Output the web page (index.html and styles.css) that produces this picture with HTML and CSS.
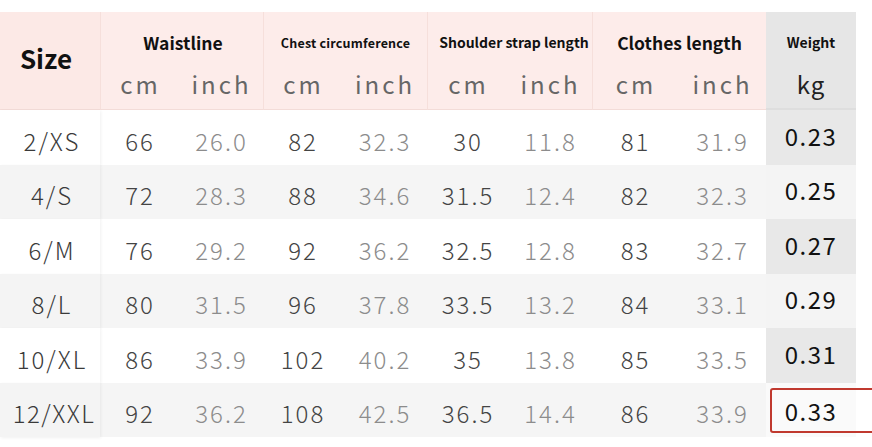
FILE: index.html
```html
<!DOCTYPE html>
<html>
<head>
<meta charset="utf-8">
<link rel="stylesheet" href="styles.css">
</head>
<body>
<div class="page">
  <div class="chart">
    <div class="h-size">Size</div>
    <div class="h-group g1">Waistline</div>
    <div class="h-group g2 small">Chest circumference</div>
    <div class="h-group g3 mid">Shoulder strap length</div>
    <div class="h-group g4">Clothes length</div>
    <div class="h-weight">Weight</div>

    <div class="h-unit">cm</div><div class="h-unit right-line">inch</div>
    <div class="h-unit">cm</div><div class="h-unit right-line">inch</div>
    <div class="h-unit">cm</div><div class="h-unit right-line">inch</div>
    <div class="h-unit">cm</div><div class="h-unit">inch</div>
    <div class="h-unit kg">kg</div>

    <div class="c size">2/XS</div><div class="c cm">66</div><div class="c in">26.0</div><div class="c cm">82</div><div class="c in">32.3</div><div class="c cm">30</div><div class="c in">11.8</div><div class="c cm">81</div><div class="c in">31.9</div><div class="c w dark">0.23</div>

    <div class="c size alt">4/S</div><div class="c cm alt">72</div><div class="c in alt">28.3</div><div class="c cm alt">88</div><div class="c in alt">34.6</div><div class="c cm alt">31.5</div><div class="c in alt">12.4</div><div class="c cm alt">82</div><div class="c in alt">32.3</div><div class="c w alt">0.25</div>

    <div class="c size">6/M</div><div class="c cm">76</div><div class="c in">29.2</div><div class="c cm">92</div><div class="c in">36.2</div><div class="c cm">32.5</div><div class="c in">12.8</div><div class="c cm">83</div><div class="c in">32.7</div><div class="c w dark">0.27</div>

    <div class="c size alt">8/L</div><div class="c cm alt">80</div><div class="c in alt">31.5</div><div class="c cm alt">96</div><div class="c in alt">37.8</div><div class="c cm alt">33.5</div><div class="c in alt">13.2</div><div class="c cm alt">84</div><div class="c in alt">33.1</div><div class="c w alt">0.29</div>

    <div class="c size">10/XL</div><div class="c cm">86</div><div class="c in">33.9</div><div class="c cm">102</div><div class="c in">40.2</div><div class="c cm">35</div><div class="c in">13.8</div><div class="c cm">85</div><div class="c in">33.5</div><div class="c w dark">0.31</div>

    <div class="c size alt last">12/XXL</div><div class="c cm alt">92</div><div class="c in alt">36.2</div><div class="c cm alt">108</div><div class="c in alt">42.5</div><div class="c cm alt">36.5</div><div class="c in alt">14.4</div><div class="c cm alt">86</div><div class="c in alt">33.9</div><div class="c w light">0.33</div>
  </div>
  <div class="highlight"></div>
</div>
</body>
</html>
```

FILE: styles.css
```css
html, body {
  margin: 0;
  padding: 0;
  background: #ffffff;
}

.page {
  position: relative;
  width: 872px;
  height: 447px;
  overflow: hidden;
  padding-top: 12px;
  box-sizing: border-box;
  font-family: "Noto Sans CJK SC", "Noto Sans", sans-serif;
}

.chart {
  display: grid;
  width: 856px;
  grid-template-columns: 100px 80px 83px 80px 84px 82px 83px 87px 87px 90px;
  grid-template-rows: 58px 40px repeat(6, 54.5px);
}

.h-size {
  grid-row: 1 / span 2;
  grid-column: 1;
  background: #fce9e6;
  display: flex;
  align-items: center;
  justify-content: center;
  font-weight: 700;
  font-size: 26px;
  color: #111;
  padding-bottom: 6px;
  padding-right: 8px;
  border-bottom: 1px solid #f3dcd8;
  box-sizing: border-box;
}

.h-group {
  background: #fdecea;
  display: flex;
  align-items: center;
  justify-content: center;
  font-weight: 700;
  font-size: 17.5px;
  color: #111;
  padding-top: 2px;
  white-space: nowrap;
  border-left: 1px solid #f6dfdb;
}
.h-group.small { font-size: 12.5px; letter-spacing: 0.2px; }
.h-group.mid { font-size: 14px; padding-left: 8px; }

.g1 { grid-column: 2 / span 2; padding-left: 2px; }
.g2 { grid-column: 4 / span 2; }
.g3 { grid-column: 6 / span 2; }
.g4 { grid-column: 8 / span 2; }

.h-weight {
  grid-column: 10;
  background: #e6e6e6;
  display: flex;
  align-items: center;
  justify-content: center;
  font-weight: 700;
  font-size: 14px;
  color: #111;
  padding-top: 2px;
}

.h-unit {
  background: #fdecea;
  display: flex;
  align-items: flex-start;
  justify-content: center;
  font-size: 24px;
  line-height: 28px;
  color: #666;
  letter-spacing: 3px;
  border-bottom: 1px solid #f3dcd8;
  box-sizing: border-box;
}
.h-unit:nth-child(7), .h-unit:nth-child(9), .h-unit:nth-child(11), .h-unit:nth-child(13) {
  border-left: 1px solid #f6dfdb;
}
.h-unit.kg {
  background: #e6e6e6;
  color: #222;
  letter-spacing: 1px;
  border-bottom: 2px solid #dedede;
}

.c {
  display: flex;
  align-items: center;
  justify-content: center;
  font-size: 24px;
  font-weight: 300;
  letter-spacing: 2px;
  padding-top: 6px;
  box-sizing: border-box;
  background: #ffffff;
}
.c.alt { background: #f5f5f5; }

.size {
  color: #3a3a3a;
  padding-left: 4px;
  box-shadow: 1px 1px 3px rgba(0, 0, 0, 0.06);
  position: relative;
  z-index: 1;
}
.size.alt { background: #f4f4f4; }
.size.last { letter-spacing: 1.5px; padding-left: 8px; }

.cm { color: #444; }
.in { color: #8c8c8c; }

.w {
  color: #111;
  font-weight: 400;
  padding-top: 0;
  padding-bottom: 4px;
  letter-spacing: 1.5px;
}
.w.dark { background: #e8e8e8; }
.w.alt { background: #f4f4f4; }
.w.light { background: #fafafa; padding-bottom: 0; padding-top: 2px; }

.highlight {
  position: absolute;
  left: 770px;
  top: 388px;
  width: 112px;
  height: 45px;
  border: 2px solid #c0392f;
  border-radius: 3px;
  box-sizing: border-box;
}
```
